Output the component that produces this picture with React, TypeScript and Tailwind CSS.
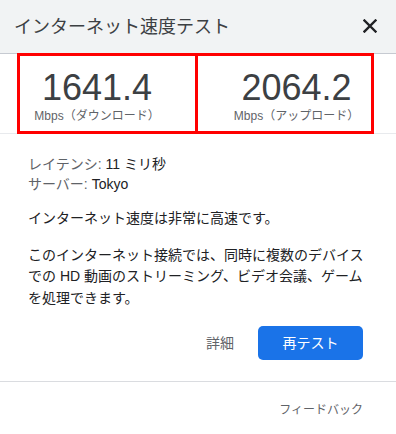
import React from "react";

const FONT = { fontFamily: '"Liberation Sans", Arial, "Noto Sans CJK JP", sans-serif' };

export default function App() {
  return (
    <div className="relative w-[396px] h-[434px] bg-white overflow-hidden" style={FONT}>
      {/* Header */}
      <div className="h-[54px] bg-[#f1f3f4] border-b border-[#c6cad1] flex items-center justify-between pl-[14px] pr-[19px]">
        <div className="text-[18px] leading-[24px] text-[#3c4043] pt-[1px]">インターネット速度テスト</div>
        <svg width="14" height="14" viewBox="0 0 14 14" className="mb-[2px]">
          <path d="M1.5 1.5 L12.5 12.5 M12.5 1.5 L1.5 12.5" stroke="#202124" strokeWidth="2.4" strokeLinecap="square" />
        </svg>
      </div>

      {/* Results */}
      <div className="h-[80px] border-b border-[#e8eaed] flex">
        <div className="w-[194px] flex flex-col items-center pt-[16px]">
          <div className="text-[36px] leading-[36px] text-[#3c4043]">1641.4</div>
          <div className="text-[12px] leading-[14px] text-[#5f6368] mt-[3px]">Mbps（ダウンロード）</div>
        </div>
        <div className="w-[3px]" />
        <div className="w-[199px] flex flex-col items-center pt-[16px]">
          <div className="text-[36px] leading-[36px] text-[#3c4043]">2064.2</div>
          <div className="text-[12px] leading-[14px] text-[#5f6368] mt-[3px]">Mbps（アップロード）</div>
        </div>
      </div>

      {/* Body */}
      <div className="pl-[28px] pr-[33px] pt-[20px] text-[14px] text-[#202124]">
        <div className="leading-[20px]">
          <span className="text-[#5f6368]">レイテンシ: </span>11 ミリ秒
        </div>
        <div className="leading-[20px]">
          <span className="text-[#5f6368]">サーバー: </span>Tokyo
        </div>
        <div className="leading-[21.5px] mt-[14px]">インターネット速度は非常に高速です。</div>
        <div className="leading-[21.5px] mt-[15px] mr-[-8px] whitespace-nowrap">
          このインターネット接続では、同時に複数のデバイス
          <br />
          での HD 動画のストリーミング、ビデオ会議、ゲーム
          <br />
          を処理できます。
        </div>
        <div className="flex justify-end items-center mt-[17px] gap-[24px]">
          <span className="text-[#5f6368] leading-[20px]">詳細</span>
          <button className="w-[105px] h-[34px] rounded-[5px] bg-[#1a73e8] text-white text-[14px] leading-[20px]">
            再テスト
          </button>
        </div>
      </div>

      <div className="mt-[21px] border-t border-[#dadce0]" />
      <div className="flex justify-end pr-[33px] pt-[20px]">
        <span className="text-[12px] leading-[16px] text-[#5f6368]">フィードバック</span>
      </div>

      {/* Red annotation boxes */}
      <div className="absolute left-[17px] top-[53px] w-[181px] h-[81px] border-[3px] border-[#ff0000]" />
      <div className="absolute left-[195px] top-[53px] w-[179px] h-[81px] border-[3px] border-[#ff0000]" />
    </div>
  );
}
